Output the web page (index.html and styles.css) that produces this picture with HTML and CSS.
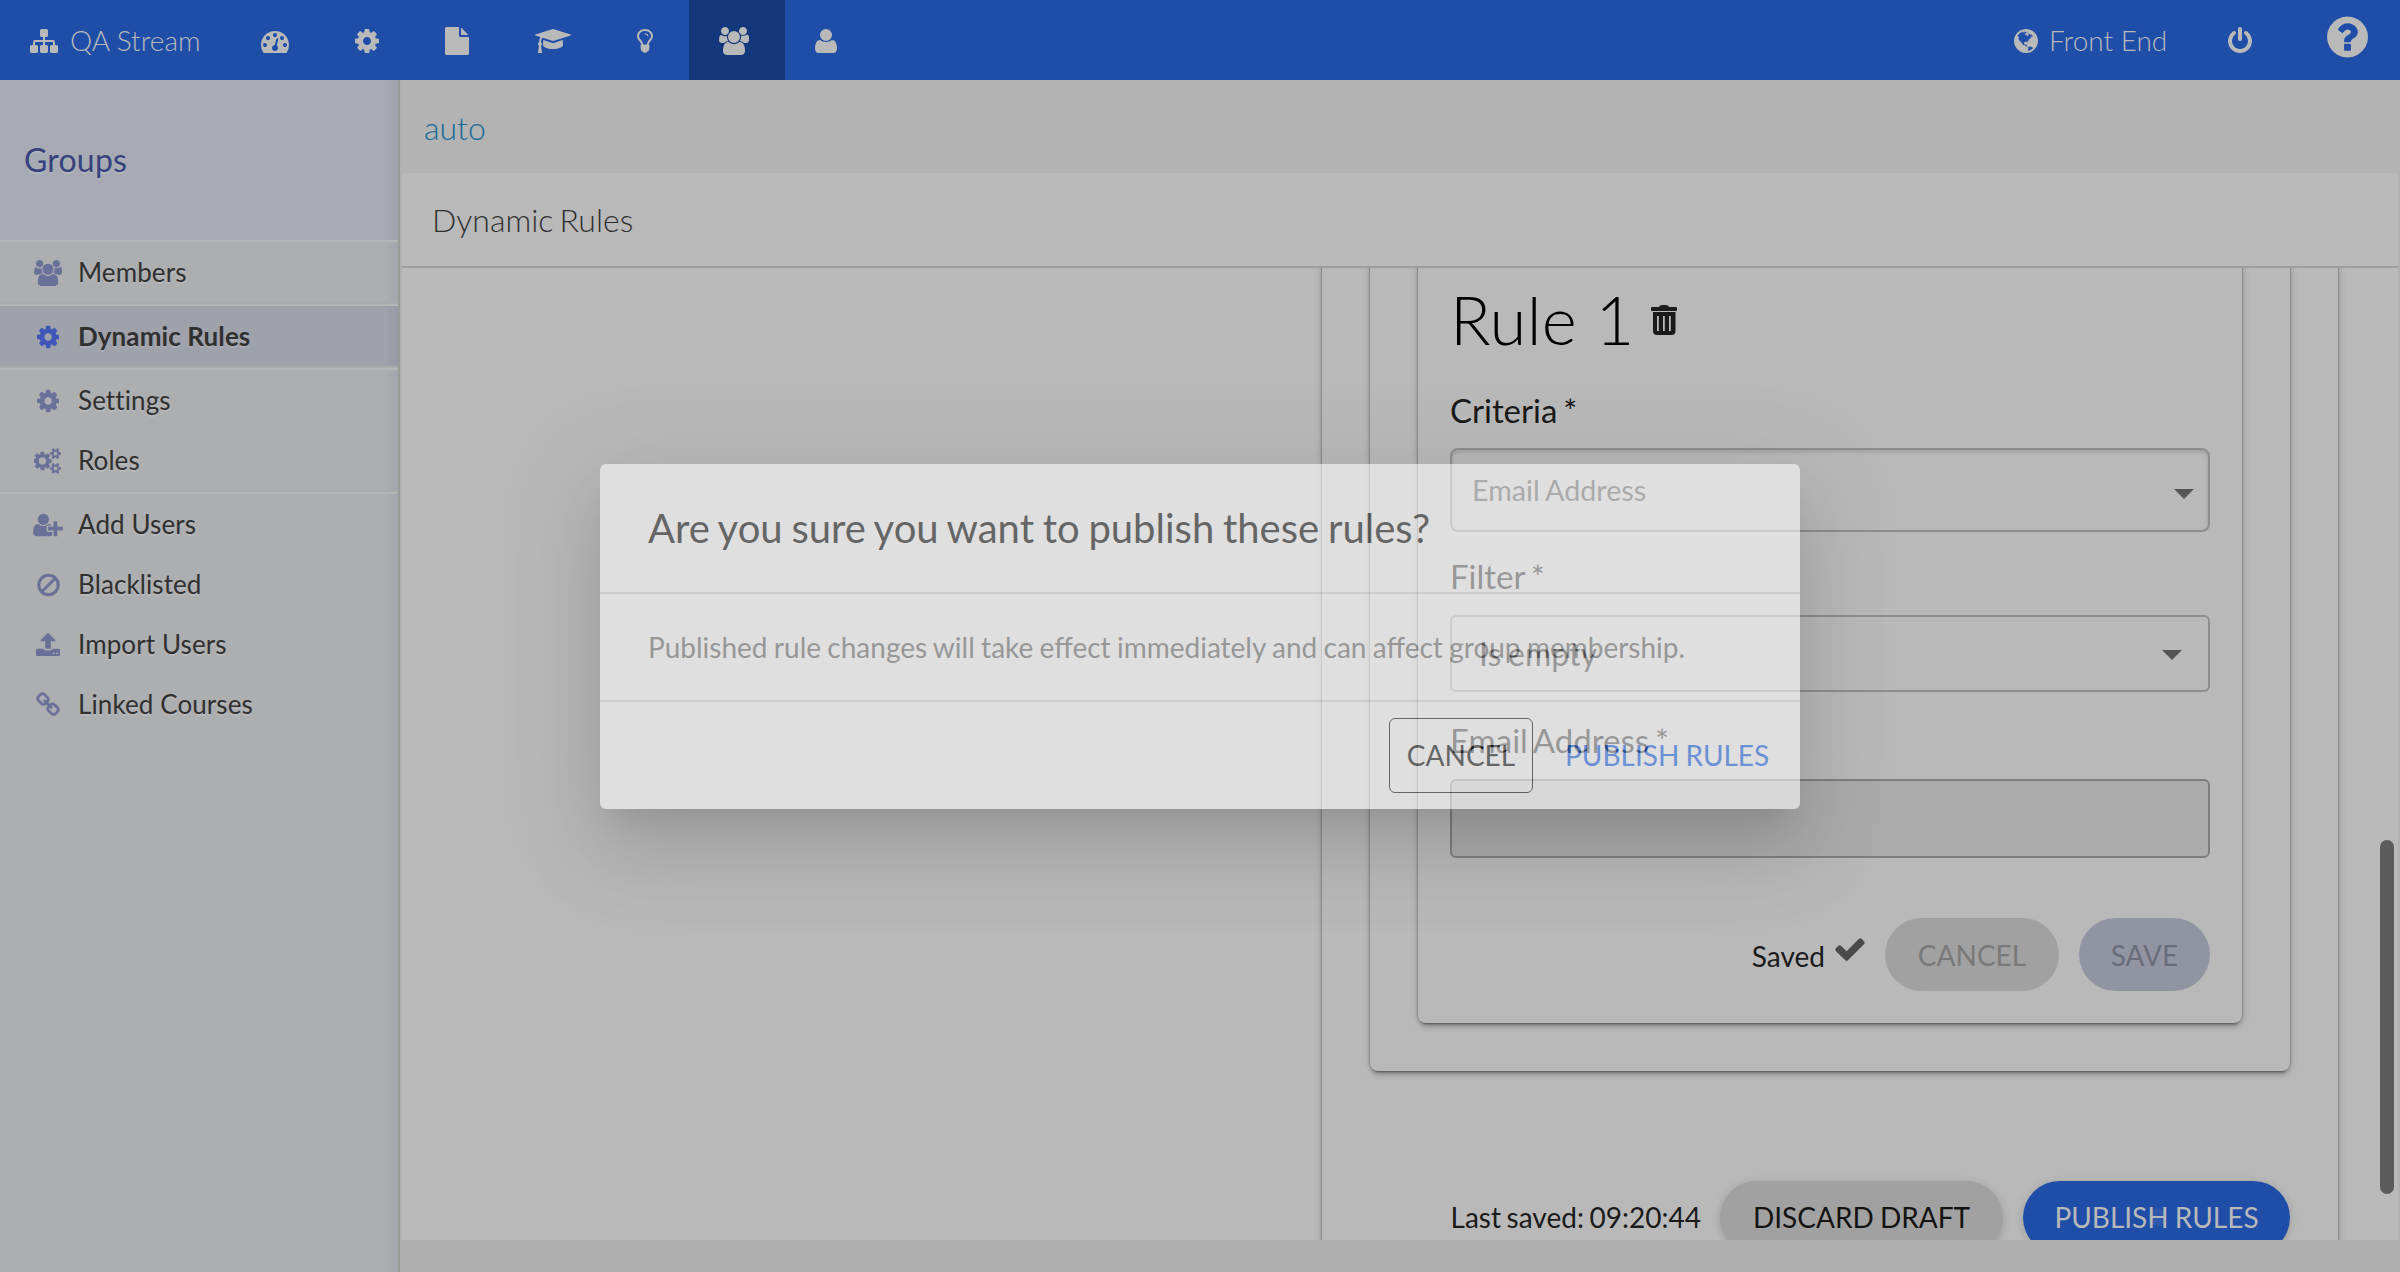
FILE: index.html
```html
<!DOCTYPE html>
<html lang="en">
<head>
<meta charset="utf-8">
<title>Dynamic Rules</title>
<link rel="stylesheet" href="styles.css">
</head>
<body>
<svg class="defs" aria-hidden="true">
  <symbol id="cog" viewBox="128 0 1536 1792"><path d="M1152 896q0-106-75-181t-181-75-181 75-75 181 75 181 181 75 181-75 75-181zm512-109v222q0 12-8 23t-20 13l-185 28q-19 54-39 91 35 50 107 138 10 12 10 25t-9 23q-27 37-99 108t-94 71q-12 0-26-9l-138-108q-44 23-91 38-16 136-29 186-7 28-36 28h-222q-14 0-24.500-8.500t-11.500-21.500l-28-184q-49-16-90-37l-141 107q-10 9-25 9-14 0-25-11-126-114-165-168-7-10-7-23 0-12 8-23 15-21 51-66.500t54-70.500q-27-50-41-99l-183-27q-13-2-21-12.500t-8-23.500v-222q0-12 8-23t19-13l186-28q14-46 39-92-40-57-107-138-10-12-10-24 0-10 9-23 26-36 98.500-107.500t94.500-71.500q13 0 26 10l138 107q44-23 91-38 16-136 29-186 7-28 36-28h222q14 0 24.500 8.500t11.500 21.500l28 184q49 16 90 37l142-107q9-9 24-9 13 0 25 10 129 119 165 170 7 8 7 22 0 12-8 23-15 21-51 66.500t-54 70.500q26 50 41 98l183 28q13 2 21 12.500t8 23.500z"/></symbol>
  <symbol id="group" viewBox="64 0 1920 1792"><path d="M657 896q-162 5-265 128h-134q-82 0-138-40.500t-56-118.500q0-353 124-353 6 0 43.500 21t97.500 42.500 119 21.500q67 0 133-23-5 37-5 66 0 159 93 293zm1071 637q0 120-73 189.500t-194 69.500h-874q-121 0-194-69.500t-73-189.500q0-53 3.500-103.500t14-109 26.500-108.500 43-97.500 62-81 85.500-53.500 111.500-20q10 0 43 21.500t73 48 107 48 135 21.500 135-21.500 107-48 73-48 43-21.500q61 0 111.500 20t85.500 53.500 62 81 43 97.500 26.500 108.500 14 109 3.500 103.500zm-1024-1277q0 106-75 181t-181 75-181-75-75-181 75-181 181-75 181 75 75 181zm704 384q0 159-112.500 271.500t-271.500 112.500-271.500-112.500-112.500-271.500 112.500-271.500 271.500-112.500 271.500 112.500 112.500 271.500zm576 225q0 78-56 118.500t-138 40.500h-134q-103-123-265-128 93-134 93-293 0-29-5-66 66 23 133 23 59 0 119-21.500t97.500-42.500 43.500-21q124 0 124 353zm-128-609q0 106-75 181t-181 75-181-75-75-181 75-181 181-75 181 75 75 181z"/></symbol>
</svg>

<header class="topbar">
  <a class="brand">
    <svg class="ico" width="28" height="28" viewBox="0 0 1792 1792"><path d="M1792 1248v320q0 40-28 68t-68 28h-320q-40 0-68-28t-28-68v-320q0-40 28-68t68-28h96v-192h-512v192h96q40 0 68 28t28 68v320q0 40-28 68t-68 28h-320q-40 0-68-28t-28-68v-320q0-40 28-68t68-28h96v-192h-512v192h96q40 0 68 28t28 68v320q0 40-28 68t-68 28h-320q-40 0-68-28t-28-68v-320q0-40 28-68t68-28h96v-192q0-52 38-90t90-38h512v-192h-96q-40 0-68-28t-28-68v-320q0-40 28-68t68-28h320q40 0 68 28t28 68v320q0 40-28 68t-68 28h-96v192h512q52 0 90 38t38 90v192h96q40 0 68 28t28 68z"/></svg>
    <span>QA Stream</span>
  </a>
  <nav class="tabs">
    <a class="tab"><svg class="ico" width="28" height="28" viewBox="0 0 1792 1792"><path d="M384 1152q0-53-37.500-90.500t-90.500-37.500-90.500 37.500-37.500 90.500 37.500 90.500 90.500 37.500 90.500-37.500 37.500-90.500zm192-448q0-53-37.500-90.500t-90.500-37.500-90.500 37.500-37.500 90.500 37.500 90.500 90.500 37.500 90.500-37.500 37.500-90.500zm428 481l101-382q6-26-7.500-48.500t-38.500-29.500-48 6.500-30 39.500l-101 382q-60 5-107 43.500t-63 98.500q-20 77 20 146t117 89 146-20 89-117q16-60-6-117t-72-91zm660-33q0-53-37.500-90.500t-90.500-37.500-90.500 37.500-37.500 90.500 37.500 90.500 90.500 37.500 90.500-37.500 37.500-90.500zm-640-640q0-53-37.500-90.500t-90.500-37.500-90.500 37.500-37.500 90.500 37.500 90.500 90.500 37.500 90.500-37.500 37.500-90.500zm448 192q0-53-37.500-90.500t-90.500-37.500-90.500 37.500-37.500 90.500 37.500 90.500 90.500 37.500 90.500-37.500 37.500-90.500zm320 448q0 261-141 483-19 29-54 29h-1402q-35 0-54-29-141-221-141-483 0-182 71-348t191-286 286-191 348-71 348 71 286 191 191 286 71 348z"/></svg></a>
    <a class="tab"><svg class="ico" width="24" height="28"><use href="#cog"/></svg></a>
    <a class="tab"><svg class="ico" width="24" height="28" viewBox="128 0 1536 1792"><path d="M1152 512v-472q22 14 36 28l408 408q14 14 28 36h-472zm-128 32q0 40 28 68t68 28h544v1056q0 40-28 68t-68 28h-1344q-40 0-68-28t-28-68v-1600q0-40 28-68t68-28h800v544z"/></svg></a>
    <a class="tab"><svg class="ico" width="36" height="28" viewBox="0 0 2304 1792"><path d="M1774 836l18 316q4 69-82 128t-235 93.500-323 34.500-323-34.500-235-93.500-82-128l18-316 574 181q22 7 48 7t48-7zm530-324q0 23-22 31l-1120 352q-4 1-10 1t-10-1l-652-206q-43 34-71 111.500t-34 178.500q63 36 63 109 0 69-58 107l58 433q2 14-8 25-9 11-24 11h-192q-15 0-24-11-10-11-8-25l58-433q-58-38-58-107 0-73 65-111 11-207 98-330l-333-104q-22-8-22-31t22-31l1120-352q4-1 10-1t10 1l1120 352q22 8 22 31z"/></svg></a>
    <a class="tab"><svg class="ico" width="16" height="28" viewBox="384 0 1024 1792"><path d="M1120 576q0 13-9.500 22.500t-22.500 9.500-22.500-9.500-9.500-22.500q0-46-54-71t-106-25q-13 0-22.500-9.500t-9.500-22.500 9.500-22.500 22.500-9.500q50 0 99.500 16t87 54 37.500 90zm160 0q0-72-34.500-134t-90-101.500-123-62-136.500-22.500-136.500 22.500-123 62-90 101.500-34.500 134q0 101 68 180 10 11 30.500 33t30.500 33q128 153 141 298h228q13-145 141-298 10-11 30.500-33t30.500-33q68-79 68-180zm128 0q0 155-103 268-45 49-74.500 87t-59.500 95.500-34 107.500q47 28 47 82 0 37-25 64 25 27 25 64 0 52-45 81 13 23 13 47 0 46-31.500 71t-77.500 25q-20 44-60 70t-87 26-87-26-60-70q-46 0-77.500-25t-31.500-71q0-24 13-47-45-29-45-81 0-37 25-64-25-27-25-64 0-54 47-82-4-50-34-107.500t-59.500-95.500-74.500-87q-103-113-103-268 0-99 44.500-184.500t117-142 164-89 186.500-32.500 186.500 32.500 164 89 117 142 44.500 184.500z"/></svg></a>
    <a class="tab tab-active"><svg class="ico" width="30" height="28"><use href="#group"/></svg></a>
    <a class="tab"><svg class="ico" width="22" height="28" viewBox="192 0 1408 1792"><path d="M1600 1399q0 109-62.500 187t-150.500 78h-982q-88 0-150.500-78t-62.500-187q0-85 8.500-160.500t31.500-152 58.500-131 94-89 134.500-34.500q131 128 377 128t377-128q76 0 134.500 34.500t94 89 58.500 131 31.500 152 8.500 160.500zm-320-887q0 159-112.500 271.500t-271.500 112.500-271.500-112.500-112.500-271.500 112.500-271.500 271.500-112.500 271.500 112.500 112.500 271.500z"/></svg></a>
  </nav>
  <div class="tools">
    <a class="front">
      <svg class="ico" width="24" height="28" viewBox="128 0 1536 1792"><path d="M896 128q209 0 385.500 103t279.500 279.500 103 385.500-103 385.500-279.500 279.500-385.500 103-385.500-103-279.500-279.500-103-385.500 103-385.500 279.500-279.500 385.500-103zm274 521q-2 1-9.500 9.500t-13.500 9.500q2 0 4.500-5t5-11 3.500-7q6-7 22-15 14-6 52-12 34-8 51 11-2-2 9.500-13t14.500-12q3-2 15-4.500t15-7.500l2-22q-12 1-17.500-7t-6.500-21q0 2-6 8 0-7-4.500-8t-11.500 1-9 1q-10-3-15-7.500t-8-16.500-4-15q-2-5-9.500-11t-9.500-10q-1-2-2.500-5.500t-3-6.500-4-5.500-5.500-2.500-7 5-7.500 10-4.500 5q-3-2-6-1.500t-4.500 1-4.500 3-5 3.500q-3 2-8.500 3t-8.500 2q15-5-1-11-10-4-16-3 9-4 7.500-12t-8.500-14h5q-1-4-8.500-8.500t-17.500-8.500-13-6q-8-5-34-9.500t-33-.5q-5 6-4.500 10.500t4 14 3.500 12.500q1 6-5.500 13t-6.500 12q0 7 14 15.500t10 21.500q-3 8-16 16t-16 12q-5 8-1.500 18.500t10.500 16.500q2 2 1.500 4t-3.500 4.500-5.500 4-6.500 3.500l-3 2q-11 5-20.500-6t-13.500-26q-7-25-16-30-23-8-29 1-5-13-41-26-25-9-58-4 6-1 0-15-7-15-19-12 3-6 4-17.500t1-13.500q3-13 12-23 1-1 7-8.500t9.500-13.500.5-6q35 4 50-11 5-5 11.500-17t10.500-17q9-6 14-5.500t14.500 5.500 14.500 5q14 1 15.500-11t-7.500-20q12 1 3-17-4-7-8-9-12-4-27 5-8 4 2 8-1-1-9.500 10.500t-16.500 17.500-16-5q-1-1-5.500-13.500t-9.500-13.500q-8 0-16 15 3-8-11-15t-24-8q19-12-8-27-7-4-20.500-5t-19.500 4q-5 7-5.500 11.500t5 8 10.500 5.500 11.500 4 8.500 3q14 10 8 14-2 1-8.500 3.500t-11.500 4.500-6 4q-3 4 0 14t-2 14q-5-5-9-17.500t-7-16.500q7 9-25 6l-10-1q-4 0-16 2t-20.500 1-13.500-8q-4-8 0-20 1-4 4-2-4-3-11-9.500t-10-8.500q-46 15-94 41 6 1 12-1 5-2 13-6.500t10-5.500q34-14 42-7l5-5q14 16 20 25-7-4-30-1-20 6-22 12 7 12 5 18-4-3-11.500-10t-14.500-11-15-5q-16 0-22 1-146 80-235 222 7 7 12 8 4 1 5 9t2.500 11 11.500-3q9 8 3 19 1-1 44 27 19 17 21 21 3 11-10 18-1-2-9-9t-9-4q-3 5 .5 18.500t10.500 12.500q-7 0-9.500 16t-2.500 35.500-1 23.500l2 1q-3 12 5.500 34.500t21.500 19.500q-13 3 20 43 6 8 8 9 3 2 12 7.500t15 10 10 10.500q4 5 10 22.500t14 23.500q-2 6 9.500 20t10.500 23q-1 0-2.500 1t-2.500 1q3 7 15.500 14t15.500 13q1 3 2 10t3 11 8 2q2-20-24-62-15-25-17-29-3-5-5.500-15.500t-4.500-14.500q2 0 6 1.500t8.500 3.500 7.500 4 2 3q-3 7 2 17.500t12 18.500 17 19 12 13q6 6 14 19.500t0 13.500q9 0 20 10.500t17 19.500q5 8 8 26t5 24q2 7 8.500 13.500t12.500 9.500l16 8 13 7q5 2 18.500 10.500t21.500 11.500q10 4 16 4t14.500-2.500 13.500-3.500q15-2 29 15t21 21q36 19 55 11-2 1 .5 7.500t8 15.500 9 14.500 5.500 8.500q5 6 18 15t18 15q6-4 7-9-3 8 7 20t18 10q14-3 14-32-31 15-49-18 0-1-2.500-5.500t-4-8.500-2.500-8.500 0-7.500 5-3q9 0 10-3.500t-2-12.500-4-13q-1-8-11-20t-12-15q-5 9-16 8t-16-9q0 1-1.500 5.500t-1.500 6.500q-13 0-15-1 1-3 2.500-17.500t3.500-22.500q1-4 5.500-12t7.500-14.500 4-12.500-4.500-9.500-17.500-2.500q-19 1-26 20-1 3-3 10.500t-5 11.500-9 7q-7 3-24 2t-24-5q-13-8-22.500-29t-9.500-37q0-10 2.500-26.500t3-25-5.500-24.500q3-2 9-9.500t10-10.500q2-1 4.500-1.500t4.500 0 4-1.500 3-6q-1-1-4-3-3-3-4-3 7 3 28.500-1.500t27.500 1.500q15 11 22-2 0-1-2.500-9.500t-.5-13.500q5 27 29 9 3 3 15.500 5t17.500 5q3 2 7 5.500t5.500 4.500 5-.5 8.500-6.500q10 14 12 24 11 40 19 44 7 3 11 2t4.500-9.500 0-14-1.500-12.500l-1-8v-18l-1-8q-15-3-18.500-12t1.500-18.500 15-18.500q1-1 8-3.500t15.500-6.500 12.500-8q21-19 15-35 7 0 11-9-1 0-5-3t-7.500-5-4.500-2q9-5 2-16 5-3 7.500-11t7.500-10q9 12 21 2 7-8 1-16 5-7 20.500-10.500t18.500-9.500q7 2 8-2t1-12 3-12q4-5 15-9t13-5l17-11q3-4 0-4 18 2 31-11 10-11-6-20 3-6-3-9.500t-15-5.500q3-1 11.500-.5t10.500-1.500q15-10-7-16-17-5-43 12zm-163 877q206-36 351-189-3-3-12.500-4.500t-12.500-3.500q-18-7-24-8 1-7-2.500-13t-8-9-12.500-8-11-7q-2-2-7-6t-7-5.500-7.500-4.500-8.500-2-10 1l-3 1q-3 1-5.500 2.500t-5.500 3-4 3 0 2.500q-21-17-36-22-5-1-11-5.500t-10.500-7-10-1.500-11.500 7q-5 5-6 15t-2 13q-7-5 0-17.500t2-18.500q-3-6-10.500-4.500t-12 4.500-11.500 8.500-9 6.500-8.500 5.500-8.500 7.500q-3 4-6 12t-5 11q-2-4-11.500-6.500t-9.500-5.500q2 10 4 35t5 38q7 31-12 48-27 25-29 40-4 22 12 26 0 7-8 20.500t-7 21.500q0 6 2 16z"/></svg>
      <span>Front End</span>
    </a>
    <a class="power"><svg class="ico" width="24" height="28" viewBox="128 0 1536 1792"><path d="M1664 896q0 156-61 298t-164 245-245 164-298 61-298-61-245-164-164-245-61-298q0-182 80.500-343t226.500-270q43-32 95.500-25t83.500 50q32 42 24.500 94.500t-49.500 84.500q-98 74-151.500 181t-53.500 228q0 104 40.500 198.500t109.500 163.500 163.500 109.500 198.500 40.500 198.500-40.500 163.500-109.500 109.500-163.500 40.500-198.500q0-121-53.500-228t-151.500-181q-42-32-49.500-84.500t24.500-94.500q31-43 84-50t95 25q146 109 226.500 270t80.500 343zm-640-768v640q0 52-38 90t-90 38-90-38-38-90v-640q0-52 38-90t90-38 90 38 38 90z"/></svg></a>
    <a class="help"><svg width="41" height="48" viewBox="128 0 1536 1792"><path d="M1024 1376v-192q0-14-9-23t-23-9h-192q-14 0-23 9t-9 23v192q0 14 9 23t23 9h192q14 0 23-9t9-23zm256-672q0-88-55.500-163t-138.500-116-170-41q-243 0-371 213-15 24 8 42l132 100q7 6 19 6 16 0 25-12 53-68 86-92 34-24 86-24 48 0 85.500 26t37.500 59q0 38-20 61t-68 45q-63 28-115.500 86.500t-52.500 125.500v36q0 14 9 23t23 9h192q14 0 23-9t9-23q0-19 21.500-49.500t54.500-49.500q32-18 49-28.500t46-35 44.500-48 28-60.500 12.500-81zm384 192q0 209-103 385.500t-279.500 279.500-385.500 103-385.500-103-279.500-279.500-103-385.500 103-385.500 279.500-279.500 385.500-103 385.500 103 279.500 279.500 103 385.500z"/></svg></a>
  </div>
</header>

<div class="layout">
  <aside class="sidebar">
    <h2 class="side-title">Groups</h2>
    <ul class="side-group">
      <li class="side-item"><span class="side-ico"><svg width="28" height="26"><use href="#group"/></svg></span>Members</li>
    </ul>
    <ul class="side-group side-group-active">
      <li class="side-item"><span class="side-ico"><svg width="22.300" height="26"><use href="#cog"/></svg></span>Dynamic Rules</li>
    </ul>
    <ul class="side-group">
      <li class="side-item"><span class="side-ico"><svg width="22.300" height="26"><use href="#cog"/></svg></span>Settings</li>
      <li class="side-item"><span class="side-ico"><svg width="28" height="26" viewBox="0 0 1920 1792"><path d="M832 896q0-106-75-181t-181-75-181 75-75 181 75 181 181 75 181-75 75-181zm768 512q0-52-38-90t-90-38-90 38-38 90q0 53 37.500 90.500t90.500 37.500 90.500-37.500 37.500-90.500zm0-1024q0-52-38-90t-90-38-90 38-38 90q0 53 37.500 90.500t90.500 37.500 90.500-37.500 37.500-90.500zm-384 421v185q0 10-7 19.500t-16 10.500l-155 24q-11 35-32 76 34 48 90 115 7 11 7 20 0 12-7 19-23 30-82.500 89.500t-78.500 59.500q-11 0-21-7l-115-90q-37 19-77 31-11 108-23 155-7 24-30 24h-186q-11 0-20-7.500t-10-17.500l-23-153q-34-10-75-31l-118 89q-7 7-20 7-11 0-21-8-144-133-144-160 0-9 7-19 10-14 41-53t47-61q-23-44-35-82l-152-24q-10-1-17-9.500t-7-19.500v-185q0-10 7-19.500t16-10.500l155-24q11-35 32-76-34-48-90-115-7-11-7-20 0-12 7-20 22-30 82-89t79-59q11 0 21 7l115 90q34-18 77-32 11-108 23-154 7-24 30-24h186q11 0 20 7.500t10 17.500l23 153q34 10 75 31l118-89q8-7 20-7 11 0 21 8 144 133 144 160 0 8-7 19-12 16-42 54t-45 60q23 48 34 82l152 23q10 2 17 10.500t7 19.500zm640 533v140q0 16-149 31-12 27-30 52 51 113 51 138 0 4-4 7-122 71-124 71-8 0-46-47t-52-68q-20 2-30 2t-30-2q-14 21-52 68t-46 47q-2 0-124-71-4-3-4-7 0-25 51-138-18-25-30-52-149-15-149-31v-140q0-16 149-31 13-29 30-52-51-113-51-138 0-4 4-7 4-2 35-20t59-34 30-16q8 0 46 46.500t52 67.500q20-2 30-2t30 2q51-71 92-112l6-2q4 0 124 70 4 3 4 7 0 25-51 138 17 23 30 52 149 15 149 31zm0-1024v140q0 16-149 31-12 27-30 52 51 113 51 138 0 4-4 7-122 71-124 71-8 0-46-47t-52-68q-20 2-30 2t-30-2q-14 21-52 68t-46 47q-2 0-124-71-4-3-4-7 0-25 51-138-18-25-30-52-149-15-149-31v-140q0-16 149-31 13-29 30-52-51-113-51-138 0-4 4-7 4-2 35-20t59-34 30-16q8 0 46 46.500t52 67.500q20-2 30-2t30 2q51-71 92-112l6-2q4 0 124 70 4 3 4 7 0 25-51 138 17 23 30 52 149 15 149 31z"/></svg></span>Roles</li>
    </ul>
    <ul class="side-group side-group-last">
      <li class="side-item"><span class="side-ico"><svg width="30" height="26" viewBox="0 0 2048 1792"><path d="M704 896q-159 0-271.500-112.500t-112.500-271.500 112.500-271.500 271.500-112.500 271.500 112.500 112.500 271.500-112.500 271.500-271.500 112.500zm960 128h352q13 0 22.500 9.500t9.500 22.500v192q0 13-9.500 22.500t-22.500 9.500h-352v352q0 13-9.500 22.500t-22.500 9.500h-192q-13 0-22.500-9.500t-9.500-22.500v-352h-352q-13 0-22.500-9.500t-9.500-22.500v-192q0-13 9.500-22.500t22.500-9.500h352v-352q0-13 9.500-22.500t22.500-9.500h192q13 0 22.500 9.500t9.500 22.500v352zm-736 224q0 52 38 90t90 38h256v238q-68 50-171 50h-874q-121 0-194-69t-73-190q0-53 3.500-103.500t14-109 26.500-108.500 43-97.500 62-81 85.500-53.500 111.500-20q19 0 39 17 79 61 154.500 91.500t164.500 30.500 164.500-30.500 154.500-91.500q20-17 39-17 132 0 217 96h-223q-52 0-90 38t-38 90v192z"/></svg></span>Add Users</li>
      <li class="side-item"><span class="side-ico"><svg width="23" height="26" viewBox="0 0 23 26"><g fill="none" stroke="currentColor" stroke-width="3"><circle cx="11.500" cy="13" r="9.700"/><path d="M4.700 19.800 18.300 6.200"/></g></svg></span>Blacklisted</li>
      <li class="side-item"><span class="side-ico"><svg width="24" height="26" viewBox="64 0 1664 1792"><path d="M1344 1472q0-26-19-45t-45-19-45 19-19 45 19 45 45 19 45-19 19-45zm256 0q0-26-19-45t-45-19-45 19-19 45 19 45 45 19 45-19 19-45zm128-224v320q0 40-28 68t-68 28h-1472q-40 0-68-28t-28-68v-320q0-40 28-68t68-28h427q21 56 70.500 92t110.500 36h256q61 0 110.500-36t70.500-92h427q40 0 68 28t28 68zm-325-648q-17 40-59 40h-256v448q0 26-19 45t-45 19h-256q-26 0-45-19t-19-45v-448h-256q-42 0-59-40-17-39 14-69l448-448q18-19 45-19t45 19l448 448q31 30 14 69z"/></svg></span>Import Users</li>
      <li class="side-item"><span class="side-ico"><svg width="24" height="26" viewBox="64 0 1664 1792"><path d="M1520 1216q0-40-28-68l-208-208q-28-28-68-28-42 0-72 32 3 3 19 18.500t21.500 21.500 15 19 13 25.500 3.500 27.500q0 40-28 68t-68 28q-15 0-27.500-3.500t-25.500-13-19-15-21.500-21.500-18.500-19q-33 31-33 73 0 40 28 68l206 207q27 27 68 27 40 0 68-26l147-146q28-28 28-67zm-703-705q0-40-28-68l-206-207q-28-28-68-28-39 0-68 27l-147 146q-28 28-28 67 0 40 28 68l208 208q27 27 68 27 42 0 72-31-3-3-19-18.500t-21.500-21.500-15-19-13-25.500-3.500-27.500q0-40 28-68t68-28q15 0 27.500 3.500t25.500 13 19 15 21.500 21.500 18.500 19q33-31 33-73zm895 705q0 120-85 203l-147 146q-83 83-203 83-121 0-204-85l-206-207q-83-83-83-203 0-123 88-209l-88-88q-86 88-208 88-120 0-204-84l-208-208q-84-84-84-204t85-203l147-146q83-83 203-83 121 0 204 85l206 207q83 83 83 203 0 123-88 209l88 88q86-88 208-88 120 0 204 84l208 208q84 84 84 204z"/></svg></span>Linked Courses</li>
    </ul>
  </aside>

  <main class="content">
    <div class="crumb">auto</div>
    <div class="pane">
      <h1 class="pane-title">Dynamic Rules</h1>
      <div class="scroll">
        <section class="card card-outer">
          <div class="card card-middle">
            <div class="card card-rule">
              <div class="rule-head">
                <h2 class="rule-title">Rule 1</h2>
                <svg class="trash" width="26" height="30" viewBox="0 0 26 30"><path d="M8 2q.500-2 3-2h4q2.500 0 3 2h7q1 0 1 1v2q0 1-1 1H1Q0 6 0 5V3q0-1 1-1z"/><path fill-rule="evenodd" d="M2 7h22.500v19q0 4-4 4H6q-4 0-4-4zm4 4v15h1.800V11zm6 0v15h1.800V11zm6 0v15h1.800V11z"/></svg>
              </div>
              <label class="label label-criteria">Criteria *</label>
              <div class="select select-criteria"><span>Email Address</span><i class="caret"></i></div>
              <label class="label label-filter">Filter *</label>
              <div class="select select-filter"><span>Is empty</span><i class="caret"></i></div>
              <label class="label label-email">Email Address *</label>
              <div class="input"></div>
              <div class="rule-actions">
                <span class="saved">Saved</span>
                <svg class="check" width="34" height="34" viewBox="0 0 1792 1792"><path d="M1671 566q0 40-28 68l-724 724-136 136q-28 28-68 28t-68-28l-136-136-362-362q-28-28-28-68t28-68l136-136q28-28 68-28t68 28l294 295 656-657q28-28 68-28t68 28l136 136q28 28 28 68z"/></svg>
                <button class="pill pill-cancel">CANCEL</button>
                <button class="pill pill-save">SAVE</button>
              </div>
            </div>
          </div>
          <div class="publish-row">
            <span class="last-saved">Last saved: 09:20:44</span>
            <button class="pill pill-discard">DISCARD DRAFT</button>
            <button class="pill pill-publish">PUBLISH RULES<i class="ripple"></i></button>
          </div>
        </section>
        <div class="scrollbar"></div>
      </div>
    </div>
  </main>
</div>

<div class="modal" role="dialog">
  <h3 class="modal-title">Are you sure you want to publish these rules?</h3>
  <p class="modal-body">Published rule changes will take effect immediately and can affect group membership.</p>
  <div class="modal-actions">
    <button class="btn btn-cancel">CANCEL</button>
    <button class="btn btn-publish">PUBLISH RULES</button>
  </div>
</div>
</body>
</html>
```
FILE: styles.css
```css
* { box-sizing: border-box; }

body {
  margin: 0;
  width: 2400px;
  height: 1272px;
  overflow: hidden;
  position: relative;
  display: flex;
  flex-direction: column;
  background: #b0b0b0;
  font-family: Lato, "Liberation Sans", sans-serif;
  font-size: 28px;
  color: #1a1a1a;
}

h1, h2, h3, p, ul { margin: 0; padding: 0; font-weight: 400; }
ul { list-style: none; }
button { font: inherit; border: 0; padding: 0; margin: 0; white-space: nowrap; word-spacing: -1px; }
svg { display: block; fill: currentColor; flex: none; }
.defs { position: absolute; width: 0; height: 0; }

/* Top bar */
.topbar {
  height: 80px;
  flex: none;
  display: flex;
  background: #1f4ea9;
  color: #b9b9b9;
  font-weight: 300;
}
.ico { margin-top: 2px; }
.brand {
  width: 231px;
  padding-left: 30px;
  display: flex;
  align-items: center;
  gap: 12px;
  white-space: nowrap;
}
.tabs { display: flex; }
.tab {
  display: flex;
  align-items: center;
  padding: 0 36px 0 30px;
}
.tab-active { background: #12377b; }
.tools { margin-left: auto; display: flex; padding-right: 32px; }
.front { display: flex; align-items: center; gap: 11px; width: 214px; white-space: nowrap; }
.power { display: flex; align-items: center; width: 99px; }
.help { padding-top: 13px; }

/* Page layout */
.layout { flex: 1; display: flex; min-height: 0; }

/* Sidebar */
.sidebar {
  width: 400px;
  flex: none;
  display: flex;
  flex-direction: column;
  border-right: 2px solid #999;
  background: linear-gradient(90deg, #a7aab2 385px, #9fa2ab);
  font-size: 26px;
  letter-spacing: .1px;
  color: #303030;
  text-shadow: 0 2px 0 rgba(255, 255, 255, .12);
}
.side-title {
  height: 160px;
  padding-left: 24px;
  line-height: 160px;
  font-size: 32px;
  letter-spacing: .2px;
  color: #36427f;
}
.side-group {
  border-top: 2px solid #b5b6b7;
  border-bottom: 2px solid #a9aaab;
  background: linear-gradient(90deg, #adaeb0 385px, #a3a6ae);
}
.side-group-active {
  background: linear-gradient(90deg, #9fa1ab 385px, #9799a5);
  font-weight: 700;
}
.side-group-last { flex: 1; border-bottom: 0; }
.side-item { height: 60px; display: flex; align-items: center; padding-left: 31px; }
.side-ico {
  width: 34px;
  margin: 2px 13px 0 0;
  display: flex;
  justify-content: center;
  color: #6a7198;
}
.side-group-active .side-ico { color: #3f56b8; }

/* Content */
.content {
  flex: 1;
  min-width: 0;
  padding: 0 2px 32px;
  display: flex;
  flex-direction: column;
}
.crumb {
  height: 93px;
  margin-right: -2px;
  padding-left: 22px;
  line-height: 95px;
  font-size: 32px;
  font-weight: 300;
  color: #146a98;
  background: #b3b3b3;
}
.pane { flex: 1; min-height: 0; display: flex; flex-direction: column; background: #b9b9b9; }
.pane-title {
  height: 95px;
  flex: none;
  padding-left: 30px;
  line-height: 93px;
  font-size: 32px;
  font-weight: 300;
  word-spacing: -2.500px;
  color: #303030;
  border-bottom: 2px solid #9e9e9e;
}
.scroll {
  flex: 1;
  min-height: 0;
  position: relative;
  overflow: hidden;
  display: flex;
  align-items: flex-start;
  padding-left: 920px;
}
.scrollbar {
  position: absolute;
  right: 4px;
  top: 572px;
  width: 14px;
  height: 354px;
  border-radius: 7px;
  background: #5c5c5c;
}

/* Nested cards */
.card {
  background: #b9b9b9;
  border-radius: 8px;
  box-shadow: 0 6px 2px -4px rgba(0, 0, 0, .2), 0 4px 4px 0 rgba(0, 0, 0, .14), 0 2px 10px 0 rgba(0, 0, 0, .12), 0 0 1px 1px rgba(0, 0, 0, .16);
}
.card-outer { width: 1016px; margin-top: -40px; padding: 0 48px 80px; }
.card-middle { padding: 0 48px 48px; }
.card-rule { padding: 52px 32px 32px; }
.rule-head { display: flex; height: 80px; }
.rule-title {
  line-height: 79px;
  font-size: 67px;
  font-weight: 300;
  letter-spacing: .3px;
  color: #000;
  white-space: nowrap;
  width: 201px;
}
.trash { margin-top: 25px; }
.label { display: block; height: 40px; line-height: 40px; font-size: 33px; word-spacing: -2.500px; }
.label-criteria { margin: 30px 0 18px; }
.label-filter { margin: 24px 0 19px; }
.label-email { margin: 28px 0 19px; }
.select {
  display: flex;
  align-items: center;
  justify-content: space-between;
  border: 2px solid #8e8e8e;
  border-radius: 8px;
}
.select-criteria {
  height: 84px;
  padding: 0 14px 0 20px;
  font-size: 28.700px;
  word-spacing: -1px;
  color: #454545;
  box-shadow: inset 0 2px 4px rgba(0, 0, 0, .14);
}
.select-filter { height: 77px; padding: 0 26px 0 27px; border-radius: 6px; }
.select-filter span { font-size: 32px; word-spacing: -1.500px; }
.caret {
  border: 10px solid transparent;
  border-top-color: #555;
  border-bottom: 0;
  margin-top: 8px;
}
.select-filter .caret { margin-top: 2px; }
.input { height: 79px; border: 2px solid #7e7e7e; border-radius: 6px; background: #ababab; }
.rule-actions { display: flex; align-items: center; justify-content: flex-end; margin-top: 60px; }
.saved { margin-top: 2px; }
.check { margin: -12px 18px 0 8px; color: #4a4a4a; }
.pill { height: 73px; border-radius: 36.500px; position: relative; }
.pill-cancel { width: 174px; margin-right: 20px; background: #a1a1a1; color: #797979; }
.pill-save { width: 131px; background: #9195a2; color: #696d79; }
.publish-row { display: flex; align-items: center; justify-content: flex-end; margin-top: 110px; }
.last-saved { margin-top: -2px; word-spacing: -1.500px; }
.pill-discard, .pill-publish {
  padding-bottom: 1px;
  box-shadow: 0 6px 2px -4px rgba(0, 0, 0, .15), 0 2px 10px 0 rgba(0, 0, 0, .16);
}
.pill-discard { width: 283px; margin: 0 20px 0 19px; background: #a1a1a1; color: #131313; }
.pill-publish { width: 267px; background: #1f4ea9; color: #b9b9b9; }
.ripple {
  position: absolute;
  left: 126px;
  top: 27px;
  width: 17px;
  height: 18px;
  border-radius: 50%;
  background: rgba(185, 185, 185, .1);
}

/* Confirmation dialog, part-way through its fade */
.modal {
  position: absolute;
  left: 600px;
  top: 464px;
  width: 1200px;
  height: 345px;
  border-radius: 6px;
  background: #fff;
  opacity: .545;
  box-shadow: 0 22px 30px -14px rgba(0, 0, 0, .2), 0 48px 76px 6px rgba(0, 0, 0, .14), 0 18px 92px 16px rgba(0, 0, 0, .12);
}
.modal-title {
  height: 128px;
  padding-left: 48px;
  line-height: 129px;
  font-size: 40px;
  word-spacing: -1.500px;
  color: #212121;
}
.modal-body {
  height: 110px;
  padding-left: 48px;
  line-height: 106px;
  border: solid #dedede;
  border-width: 2px 0;
  word-spacing: -.85px;
  color: #7b7b7b;
}
.modal-actions { display: flex; justify-content: flex-end; padding: 16px 32px 0 0; }
.btn { height: 75px; padding-bottom: 2px; background: none; }
.btn-cancel { width: 144px; border: 1px solid #212121; border-radius: 6px; color: #212121; margin-right: 32px; }
.btn-publish { width: 202px; margin-right: 1px; color: #2a6fee; }
```
